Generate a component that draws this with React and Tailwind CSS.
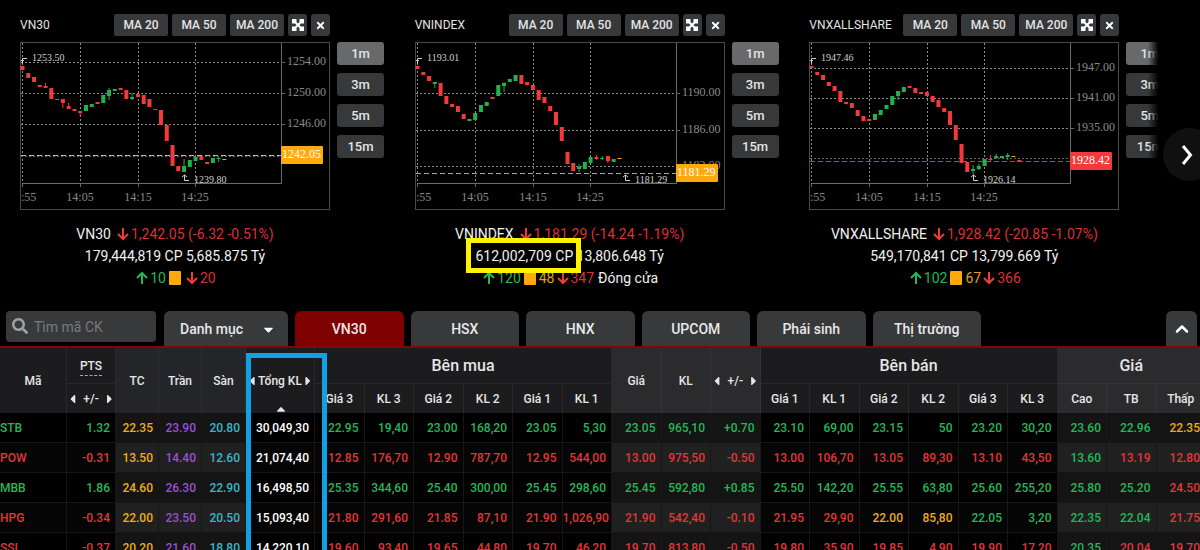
import React from 'react';
import { FaTimes, FaSearch, FaCaretDown, FaCaretLeft, FaCaretRight, FaCaretUp } from 'react-icons/fa';
import { ChevronUp } from 'lucide-react';

const GREEN = '#22b14c';
const RED = '#f23a3a';
const AMBER = '#ffa90a';

// candle: [color, bodyTop, bodyBottom, wickTop, wickBottom]
const charts = [
  {
    name: 'VN30',
    levels: [['1254.00', 20], ['1250.00', 51], ['1246.00', 82]],
    hiddenLevel: 114,
    price: { text: '1242.05', y: 113, color: AMBER, line: '#ffb400' },
    high: '1253.50',
    low: { text: '1239.80', x: 164 },
    candles: [
      ['r', 24, 28], ['r', 31, 36], ['r', 35, 40], ['r', 43, 45], ['r', 44, 46, 41], ['r', 46, 57], ['r', 57, 58],
      ['r', 57, 61, 57, 66], ['r', 64, 67, 61], ['r', 67, 69], ['r', 69, 71, 69, 74], ['g', 63, 69], ['g', 62, 65],
      ['r', 60, 62], ['g', 53, 61], ['g', 48, 54, 46, 58], ['g', 47, 49], ['r', 46, 48], ['r', 48, 57],
      ['g', 55, 57, 51, 58], ['r', 52, 55], ['r', 53, 62], ['r', 57, 65], ['r', 67, 68], ['r', 68, 83],
      ['r', 83, 99], ['r', 103, 124], ['r', 124, 129], ['g', 124, 130, 117], ['g', 118, 125], ['g', 115, 119],
      ['r', 114, 118], ['r', 120, 122], ['g', 116, 121], ['g', 116, 117, 115, 120], ['a', 117, 118], ['a', 113, 114]
    ],
    change: '1,242.05 (-6.32 -0.51%)',
    volume: '179,444,819 CP 5,685.875 Tỷ',
    up: '10',
    flat: '',
    down: '20',
    status: ''
  },
  {
    name: 'VNINDEX',
    levels: [['1190.00', 51], ['1186.00', 88], ['1182.00', 124]],
    price: { text: '1181.29', y: 131, color: AMBER, line: '#e0a000' },
    high: '1193.01',
    low: { text: '1181.29', x: 210 },
    candles: [
      ['r', 24, 27], ['r', 30, 33], ['r', 34, 39], ['g', 40, 42, 40, 46], ['r', 41, 54], ['r', 54, 62], ['r', 62, 65],
      ['r', 64, 70], ['r', 72, 77], ['g', 77, 79], ['g', 71, 78], ['g', 63, 70], ['g', 60, 64], ['r', 55, 57],
      ['g', 43, 54], ['g', 41, 44, 40, 50], ['g', 37, 40], ['g', 33, 39], ['r', 33, 42], ['r', 40, 43], ['r', 43, 48],
      ['r', 48, 58], ['r', 55, 61], ['r', 64, 69], ['r', 70, 83], ['r', 85, 99], ['r', 110, 122], ['r', 121, 129],
      ['g', 125, 127, 122, 130], ['g', 120, 127], ['g', 115, 121], ['r', 115, 117, 113, 118], ['g', 116, 117, 114, 118],
      ['r', 114, 119, 114, 121], ['g', 117, 120], ['a', 116, 117]
    ],
    change: '1,181.29 (-14.24 -1.19%)',
    volume: '612,002,709 CP 13,806.648 Tỷ',
    up: '120',
    flat: '48',
    down: '347',
    status: 'Đóng cửa',
    marked: true
  },
  {
    name: 'VNXALLSHARE',
    levels: [['1947.00', 26], ['1941.00', 56], ['1935.00', 86]],
    hiddenLevel: 116,
    price: { text: '1928.42', y: 119, color: RED, line: '#f02c2c' },
    high: '1947.46',
    low: { text: '1926.14', x: 164 },
    candles: [
      ['r', 24, 26], ['r', 30, 33], ['r', 33, 38], ['r', 40, 44], ['r', 44, 49], ['r', 49, 60], ['r', 60, 62],
      ['r', 61, 66], ['r', 68, 74], ['r', 74, 79], ['r', 77, 79], ['g', 72, 78], ['g', 68, 73], ['g', 63, 67],
      ['g', 54, 63], ['g', 49, 54, 49, 58], ['g', 45, 50], ['r', 44, 46], ['r', 46, 51], ['r', 50, 52], ['r', 50, 54],
      ['r', 54, 60], ['r', 58, 65], ['r', 66, 70], ['r', 69, 83], ['r', 83, 98], ['r', 102, 121], ['r', 120, 130],
      ['g', 127, 129, 123, 132], ['g', 124, 127, 122, 128], ['g', 117, 124], ['r', 117, 118, 113, 120],
      ['g', 114, 116, 112, 117], ['g', 114, 116], ['g', 113, 115, 111, 118], ['a', 114, 115], ['r', 118, 120]
    ],
    change: '1,928.42 (-20.85 -1.07%)',
    volume: '549,170,841 CP 13,799.669 Tỷ',
    up: '102',
    flat: '67',
    down: '366',
    status: ''
  }
];

const rows = [
  {
    code: 'STB',
    tone: 'g',
    cells: '1.32 22.35 23.90 20.80 30,049,30 22.95 19,40 23.00 168,20 23.05 5,30 23.05 965,10 +0.70 23.10 69,00 23.15 50 23.20 30,20 23.60 22.96 22.35',
    tones: { 22: 'a' }
  },
  {
    code: 'POW',
    tone: 'r',
    cells: '-0.31 13.50 14.40 12.60 21,074,40 12.85 176,70 12.90 787,70 12.95 544,00 13.00 975,50 -0.50 13.00 106,70 13.05 89,30 13.10 43,50 13.60 13.19 12.80',
    tones: { 20: 'g' }
  },
  {
    code: 'MBB',
    tone: 'g',
    cells: '1.86 24.60 26.30 22.90 16,498,50 25.35 344,60 25.40 300,00 25.45 298,60 25.45 592,80 +0.85 25.50 142,20 25.55 63,80 25.60 255,20 25.80 25.20 24.50',
    tones: { 22: 'r' }
  },
  {
    code: 'HPG',
    tone: 'r',
    cells: '-0.34 22.00 23.50 20.50 15,093,40 21.80 291,60 21.85 87,10 21.90 1,026,90 21.90 542,40 -0.10 21.95 29,90 22.00 85,80 22.05 3,20 22.35 22.04 21.75',
    tones: { 16: 'a', 17: 'a', 18: 'g', 19: 'g', 20: 'g', 21: 'g' }
  },
  {
    code: 'SSI',
    tone: 'r',
    cells: '-0.37 20.20 21.60 18.80 14,220,10 19.60 93,40 19.65 44,80 19.70 46,20 19.70 813,80 -0.50 19.80 35,90 19.85 4,90 19.90 17,20 20.35 20.04 19.70',
    tones: { 20: 'g' }
  }
];

const toneClass = {
  g: 'text-[#22b85a]',
  r: 'text-[#e23638]',
  a: 'text-[#f0ac12]',
  p: 'text-[#9a4fd4]',
  c: 'text-[#3cb4c8]',
  w: 'text-white'
};

// fixed tones for reference price, ceiling, floor and total volume
const columnTone = { 1: 'a', 2: 'p', 3: 'c', 4: 'w' };
const isShaded = (i) => (i >= 1 && i <= 3) || (i >= 11 && i <= 13) || i >= 20;

const tabs = ['VN30', 'HSX', 'HNX', 'UPCOM', 'Phái sinh', 'Thị trường'];

function ExpandIcon() {
  return (
    <svg viewBox="0 0 12 12" className="w-3 h-3" fill="currentColor">
      <path d="M0 0H4.5V3L6 4.5L7.5 3V0H12V4.5H9L7.5 6L9 7.5H12V12H7.5V9L6 7.5L4.5 9V12H0V7.5H3L4.5 6L3 4.5H0Z" />
    </svg>
  );
}

function CandleChart({ chart }) {
  const fill = { g: GREEN, r: RED, a: AMBER };
  const { price, low, hiddenLevel } = chart;

  return (
    <svg viewBox="0 0 310 168" className="block w-[310px] h-[168px] font-['Liberation_Serif',serif]" role="img" aria-label={chart.name}>
      <rect x="0.5" y="0.5" width="309" height="167" fill="none" stroke="#4a4a4a" />
      {[2, 60, 118, 175].map((x) => (
        <g key={x}>
          <line x1={x + 0.5} x2={x + 0.5} y1="1" y2="141" stroke="#8c8c8c" strokeDasharray="2 2" />
          <line x1={x + 0.5} x2={x + 0.5} y1="141" y2="145" stroke="#666" />
        </g>
      ))}
      {chart.levels.map(([text, y]) => (
        <g key={text}>
          <line x1="1" x2="261" y1={y + 0.5} y2={y + 0.5} stroke="#8c8c8c" strokeDasharray="2 2" />
          <line x1="261" x2="265" y1={y + 0.5} y2={y + 0.5} stroke="#666" />
          <text x="267" y={y + 3} fontSize="12" fill="#8a8a8a">{text}</text>
        </g>
      ))}
      {/* Level whose label sits behind the price tag */}
      {hiddenLevel && (
        <line x1="1" x2="261" y1={hiddenLevel + 0.5} y2={hiddenLevel + 0.5} stroke="#666" strokeDasharray="2 2" />
      )}
      <path d="M261.5 1V141.5H2" fill="none" stroke="#6b6b6b" />
      <text x="1" y="159" fontSize="12" fill="#8a8a8a">:55</text>
      <text x="60" y="159" fontSize="12" fill="#8a8a8a" textAnchor="middle">14:05</text>
      <text x="118" y="159" fontSize="12" fill="#8a8a8a" textAnchor="middle">14:15</text>
      <text x="175" y="159" fontSize="12" fill="#8a8a8a" textAnchor="middle">14:25</text>

      <line x1="1" x2="261" y1={price.y + 0.5} y2={price.y + 0.5} stroke={price.line} strokeDasharray="5 3" />

      {chart.candles.map(([tone, top, bottom, wickTop = top, wickBottom = bottom], i) => {
        const x = 2.5 + i * 5.77;
        return (
          <g key={i} fill={fill[tone]}>
            <rect x={x - 0.5} y={wickTop} width="1" height={wickBottom - wickTop} />
            <rect x={x - 2} y={top} width="4" height={bottom - top} />
          </g>
        );
      })}

      <path d="M2.5 22V16.5H7M1 19L2.5 17.5L4 19" fill="none" stroke="#cfcfcf" />
      <text x="12" y="19" fontSize="10" fill="#d0d0d0">{chart.high}</text>
      <path d={`M${low.x + 0.5} 133V138.5H${low.x + 5}M${low.x - 2} 135L${low.x + 0.5} 133L${low.x + 3} 135`} fill="none" stroke="#cfcfcf" />
      <text x={low.x + 10} y="141" fontSize="10" fill="#d0d0d0">{low.text}</text>

      <rect x="261" y={price.y - 9} width="42" height="18" rx="1" fill={price.color} />
      <text x="262" y={price.y + 3} fontSize="12" fill="#fff">{price.text}</text>
    </svg>
  );
}

function Down() {
  return (
    <svg viewBox="0 0 12 14" className="w-3 h-[14px] mx-[2px] text-[#f23a3a]" fill="none" stroke="currentColor" strokeWidth="2">
      <path d="M6 1V12M1 7L6 12L11 7" />
    </svg>
  );
}

function Up() {
  return (
    <svg viewBox="0 0 12 14" className="w-3 h-[14px] mx-[2px] text-[#22b85a]" fill="none" stroke="currentColor" strokeWidth="2">
      <path d="M6 13V2M1 7L6 2L11 7" />
    </svg>
  );
}

function IndexPanel({ chart }) {
  return (
    <section className="flex items-start gap-[7px]">
      <div className="w-[310px] shrink-0">
        <div className="flex items-center h-[22px] gap-1 mb-[6px] text-xs font-medium">
          <h2 className="flex-1 text-[#e4e4e4] font-normal">{chart.name}</h2>
          {['MA 20', 'MA 50', 'MA 200'].map((label) => (
            <button key={label} type="button" className="w-[54px] h-[22px] rounded-[2px] bg-[#37383a] text-[#e4e4e4] whitespace-nowrap">
              {label}
            </button>
          ))}
          <button type="button" aria-label="Expand" className="w-[19px] h-[22px] rounded-[3px] bg-[#37383a] text-white flex items-center justify-center">
            <ExpandIcon />
          </button>
          <button type="button" aria-label="Close" className="w-[19px] h-[22px] rounded-[3px] bg-[#37383a] text-white flex items-center justify-center">
            <FaTimes size={11} />
          </button>
        </div>
        <CandleChart chart={chart} />
        <div className="relative mt-[13px] text-center text-sm leading-[22px] text-[#f0f0f0] whitespace-nowrap">
          <p className="flex items-center justify-center">
            <span className="mr-1">{chart.name}</span>
            <Down />
            <span className="text-[#d93236]">{chart.change}</span>
          </p>
          <p>{chart.volume}</p>
          <p className="flex items-center justify-center">
            <Up />
            <span className="text-[#22b85a]">{chart.up}</span>
            <span className="w-3 h-[14px] rounded-[1px] bg-[#ffa90a] mx-[3px]"></span>
            <span className="text-[#e0a21a]">{chart.flat}</span>
            <Down />
            <span className="text-[#d93236]">{chart.down}</span>
            {chart.status && <span className="ml-1">{chart.status}</span>}
          </p>
          {/* Highlight frame over the traded volume */}
          {chart.marked && <div className="absolute left-[51px] top-[15px] w-[115px] h-[35px] border-[5px] border-[#fff200]"></div>}
        </div>
      </div>
      <div className="flex flex-col gap-2 mt-[28px] text-[13px] font-medium">
        {['1m', '3m', '5m', '15m'].map((label, i) => (
          <button
            key={label}
            type="button"
            className={`w-[47px] h-[23px] rounded-[3px] text-[#e4e4e4] ${i === 0 ? 'bg-[#68696b]' : 'bg-[#37383a]'}`}
          >
            {label}
          </button>
        ))}
      </div>
    </section>
  );
}

function Toolbar() {
  return (
    <nav className="flex items-end mt-[22px] pl-[6px] pr-[3px] border-b-2 border-[#7f0507] text-sm font-medium text-[#e8e8e8]">
      <div className="relative w-[150px] h-[31px] mb-1 mr-2 rounded bg-[#37393b]">
        <FaSearch size={16} className="absolute left-[6px] top-[7px] text-[#a0a0a0]" />
        <input
          type="text"
          aria-label="Tìm mã CK"
          placeholder="Tìm mã CK"
          className="w-full h-full pl-[28px] bg-transparent font-normal placeholder:text-[#77797b] outline-none"
        />
      </div>
      <div className="relative w-[124px] h-[35px] mr-[7px] rounded-t-md bg-[#37393b]">
        <select aria-label="Danh mục" className="appearance-none w-full h-full pl-4 bg-transparent outline-none">
          <option>Danh mục</option>
        </select>
        <FaCaretDown size={15} className="absolute right-3 top-[11px] text-white pointer-events-none" />
      </div>
      <div className="grid grid-cols-6 gap-[7px] w-[686px]">
        {tabs.map((tab) => (
          <button
            key={tab}
            type="button"
            className={`h-[35px] rounded-t-md ${tab === 'VN30' ? 'bg-[#7f0000]' : 'bg-[#37393b]'}`}
          >
            {tab}
          </button>
        ))}
      </div>
      <button type="button" aria-label="Collapse" className="ml-auto w-[31px] h-[35px] rounded-t-md bg-[#37393b] text-white flex items-center justify-center">
        <ChevronUp size={20} strokeWidth={3} />
      </button>
    </nav>
  );
}

function Stepper({ label, spread }) {
  return (
    <span className={`flex items-center justify-center whitespace-nowrap ${spread ? 'gap-[5px]' : ''}`}>
      <FaCaretLeft size={14} />
      {label}
      <FaCaretRight size={14} />
    </span>
  );
}

function PriceTable() {
  const dark = 'bg-[#1c1c1e] border-r border-[#28282a]';
  const shade = 'bg-[#2b2b2e] border-r border-[#343437]';
  const mid = 'bg-[#242528] border-r border-[#2e2f32]';

  return (
    <div className="relative flex-1 overflow-hidden">
      <table className="table-fixed min-w-[1206px] w-full border-separate border-spacing-0 text-xs font-medium">
        <colgroup>
          <col className="w-[67px]" />
          <col className="w-[49px]" />
          <col className="w-[43px]" />
          <col className="w-[43px]" />
          <col className="w-[44px]" />
          <col className="w-[69px]" />
          <col span={18} />
        </colgroup>
        <thead className="text-[#e6e6e6]">
          <tr className="h-9">
            <th rowSpan={2} className={`font-medium ${dark}`}>Mã</th>
            <th className={`font-medium border-b ${dark}`}>
              <span className="border-b border-dashed border-[#aaa] pb-[2px]">PTS</span>
            </th>
            <th rowSpan={2} className={`font-medium ${mid}`}>TC</th>
            <th rowSpan={2} className={`font-medium ${mid}`}>Trần</th>
            <th rowSpan={2} className={`font-medium ${mid}`}>Sàn</th>
            <th rowSpan={2} className={`relative font-medium ${dark}`}>
              <Stepper label="Tổng KL" />
              <FaCaretUp size={14} className="absolute left-[28px] bottom-[-3px]" />
            </th>
            <th colSpan={6} className={`font-medium text-base border-b ${dark}`}>Bên mua</th>
            <th rowSpan={2} className={`font-medium ${shade}`}>Giá</th>
            <th rowSpan={2} className={`font-medium ${shade}`}>KL</th>
            <th rowSpan={2} className={`font-medium ${shade}`}><Stepper label="+/-" spread /></th>
            <th colSpan={6} className={`font-medium text-base border-b ${dark}`}>Bên bán</th>
            <th colSpan={3} className={`font-medium text-base border-b ${shade}`}>Giá</th>
          </tr>
          <tr className="h-[29px]">
            <th className={`font-medium ${dark}`}><Stepper label="+/-" spread /></th>
            {['Giá 3', 'KL 3', 'Giá 2', 'KL 2', 'Giá 1', 'KL 1'].map((label) => (
              <th key={label} className={`font-medium ${dark}`}>{label}</th>
            ))}
            {['Giá 1', 'KL 1', 'Giá 2', 'KL 2', 'Giá 3', 'KL 3'].map((label) => (
              <th key={label} className={`font-medium ${dark}`}>{label}</th>
            ))}
            {['Cao', 'TB', 'Thấp'].map((label) => (
              <th key={label} className={`font-medium ${shade}`}>{label}</th>
            ))}
          </tr>
        </thead>
        <tbody>
          {rows.map((row, r) => (
            <tr key={row.code} className="h-[30px]">
              <th scope="row" className={`text-left font-medium border-r border-b border-[#161616] ${toneClass[row.tone]} ${r % 2 ? 'bg-[#050505]' : 'bg-black'}`}>
                {row.code}
              </th>
              {row.cells.split(' ').map((value, i) => {
                const tone = row.tones[i] || columnTone[i] || row.tone;
                const shaded = r % 2 ? 'bg-[#202020]' : 'bg-[#141414]';
                const plain = r % 2 ? 'bg-[#050505]' : 'bg-black';
                return (
                  <td
                    key={i}
                    className={`text-right pr-[5px] border-r border-b border-[#161616] ${toneClass[tone]} ${isShaded(i) ? shaded : plain}`}
                  >
                    {value}
                  </td>
                );
              })}
            </tr>
          ))}
        </tbody>
      </table>
      {/* Highlight frame over the total volume column */}
      <div className="absolute left-[246px] top-[5px] -bottom-2 w-[81px] border-[5px] border-[#12a0e2]"></div>
    </div>
  );
}

export default function App() {
  return (
    <main className="h-screen flex flex-col overflow-hidden bg-black font-[Roboto,sans-serif]">
      <div className="relative overflow-hidden pl-5 pt-[14px]">
        <div className="grid grid-cols-3 min-w-[1184px]">
          {charts.map((chart) => (
            <IndexPanel key={chart.name} chart={chart} />
          ))}
        </div>
        {/* Fade and carousel arrow over the last panel */}
        <div className="absolute inset-y-0 right-0 w-[52px] pt-[128px] pl-[15px] overflow-hidden bg-linear-to-r from-transparent to-black to-20%">
          <button type="button" aria-label="Next" className="w-[53px] h-[53px] pr-[6px] rounded-full bg-[#101010] text-white flex items-center justify-center">
            <svg viewBox="0 0 12 22" className="w-3 h-[22px]" fill="none" stroke="currentColor" strokeWidth="3">
              <path d="M2 2L9.5 11L2 20" />
            </svg>
          </button>
        </div>
      </div>
      <Toolbar />
      <PriceTable />
    </main>
  );
}
